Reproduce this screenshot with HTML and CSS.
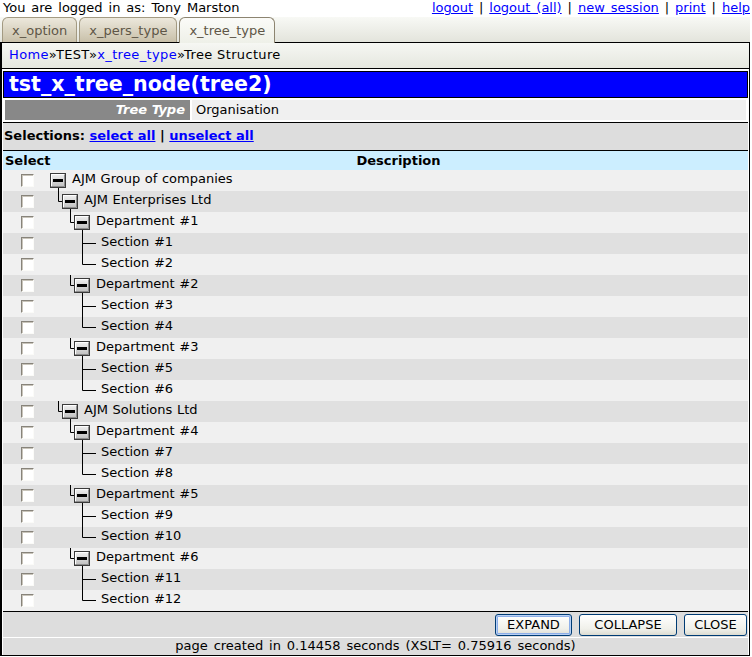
FILE: index.html
```html
<!DOCTYPE html>
<html>
<head>
<meta charset="utf-8">
<title>tst_x_tree_node(tree2)</title>
<link rel="stylesheet" href="styles.css">
</head>
<body>
<svg class="defs" width="0" height="0" aria-hidden="true">
  <defs>
    <linearGradient id="bg" x1="0" y1="0" x2="0" y2="1">
      <stop offset="0" stop-color="#f2f2f2"/>
      <stop offset="1" stop-color="#bdbdbd"/>
    </linearGradient>
    <g id="b">
      <rect x="0.5" y="0.5" width="15" height="14" fill="url(#bg)" stroke="#3a3a3a"/>
      <path d="M1.5 13V1.5H14" stroke="#ffffff" fill="none"/>
      <path d="M14.5 1.5V13.5H1.5" stroke="#8c8c8c" fill="none"/>
      <rect x="3" y="6" width="10" height="3" fill="#000"/>
    </g>
  </defs>
</svg>

<div class="topbar">
  <span>You are logged in as: Tony Marston</span>
  <span class="links"><a href="#">logout</a> | <a href="#">logout (all)</a> | <a href="#">new session</a> | <a href="#">print</a> | <a href="#">help</a></span>
</div>

<div class="tabbar">
  <span class="tab">x_option</span>
  <span class="tab">x_pers_type</span>
  <span class="tab active">x_tree_type</span>
</div>

<div class="main">
  <div class="crumbs"><a href="#">Home</a>»TEST»<a href="#">x_tree_type</a>»Tree Structure</div>
  <div class="content">
    <h1 class="title">tst_x_tree_node(tree2)</h1>
    <div class="outer">
      <div class="olabel">Tree Type</div>
      <div class="ovalue">Organisation</div>
    </div>
    <div class="selections">Selections: <a href="#">select all</a> | <a href="#">unselect all</a></div>

    <div class="grid">
      <div class="head">
        <div class="hsel">Select</div>
        <div class="hdesc">Description</div>
      </div>

      <div class="row odd"><div class="sel"><span class="cb"></span></div><div class="desc"><svg class="t" width="26" height="21"><use href="#b" x="4" y="3"/><path d="M12.5 18V21"/></svg><span class="lbl">AJM Group of companies</span></div></div>
      <div class="row even"><div class="sel"><span class="cb"></span></div><div class="desc"><svg class="t" width="38" height="21"><path d="M12.5 0V10.5H16"/><use href="#b" x="16" y="3"/><path d="M24.5 18V21"/></svg><span class="lbl">AJM Enterprises Ltd</span></div></div>
      <div class="row odd"><div class="sel"><span class="cb"></span></div><div class="desc"><svg class="t" width="50" height="21"><path d="M24.5 0V10.5H28"/><use href="#b" x="28" y="3"/><path d="M36.5 18V21"/></svg><span class="lbl">Department #1</span></div></div>
      <div class="row even"><div class="sel"><span class="cb"></span></div><div class="desc"><svg class="t" width="55" height="21"><path d="M36.5 0V21M36 10.5H50"/></svg><span class="lbl">Section #1</span></div></div>
      <div class="row odd"><div class="sel"><span class="cb"></span></div><div class="desc"><svg class="t" width="55" height="21"><path d="M36.5 0V10.5H50"/></svg><span class="lbl">Section #2</span></div></div>
      <div class="row even"><div class="sel"><span class="cb"></span></div><div class="desc"><svg class="t" width="50" height="21"><path d="M24.5 0V10.5H28"/><use href="#b" x="28" y="3"/><path d="M36.5 18V21"/></svg><span class="lbl">Department #2</span></div></div>
      <div class="row odd"><div class="sel"><span class="cb"></span></div><div class="desc"><svg class="t" width="55" height="21"><path d="M36.5 0V21M36 10.5H50"/></svg><span class="lbl">Section #3</span></div></div>
      <div class="row even"><div class="sel"><span class="cb"></span></div><div class="desc"><svg class="t" width="55" height="21"><path d="M36.5 0V10.5H50"/></svg><span class="lbl">Section #4</span></div></div>
      <div class="row odd"><div class="sel"><span class="cb"></span></div><div class="desc"><svg class="t" width="50" height="21"><path d="M24.5 0V10.5H28"/><use href="#b" x="28" y="3"/><path d="M36.5 18V21"/></svg><span class="lbl">Department #3</span></div></div>
      <div class="row even"><div class="sel"><span class="cb"></span></div><div class="desc"><svg class="t" width="55" height="21"><path d="M36.5 0V21M36 10.5H50"/></svg><span class="lbl">Section #5</span></div></div>
      <div class="row odd"><div class="sel"><span class="cb"></span></div><div class="desc"><svg class="t" width="55" height="21"><path d="M36.5 0V10.5H50"/></svg><span class="lbl">Section #6</span></div></div>
      <div class="row even"><div class="sel"><span class="cb"></span></div><div class="desc"><svg class="t" width="38" height="21"><path d="M12.5 0V10.5H16"/><use href="#b" x="16" y="3"/><path d="M24.5 18V21"/></svg><span class="lbl">AJM Solutions Ltd</span></div></div>
      <div class="row odd"><div class="sel"><span class="cb"></span></div><div class="desc"><svg class="t" width="50" height="21"><path d="M24.5 0V10.5H28"/><use href="#b" x="28" y="3"/><path d="M36.5 18V21"/></svg><span class="lbl">Department #4</span></div></div>
      <div class="row even"><div class="sel"><span class="cb"></span></div><div class="desc"><svg class="t" width="55" height="21"><path d="M36.5 0V21M36 10.5H50"/></svg><span class="lbl">Section #7</span></div></div>
      <div class="row odd"><div class="sel"><span class="cb"></span></div><div class="desc"><svg class="t" width="55" height="21"><path d="M36.5 0V10.5H50"/></svg><span class="lbl">Section #8</span></div></div>
      <div class="row even"><div class="sel"><span class="cb"></span></div><div class="desc"><svg class="t" width="50" height="21"><path d="M24.5 0V10.5H28"/><use href="#b" x="28" y="3"/><path d="M36.5 18V21"/></svg><span class="lbl">Department #5</span></div></div>
      <div class="row odd"><div class="sel"><span class="cb"></span></div><div class="desc"><svg class="t" width="55" height="21"><path d="M36.5 0V21M36 10.5H50"/></svg><span class="lbl">Section #9</span></div></div>
      <div class="row even"><div class="sel"><span class="cb"></span></div><div class="desc"><svg class="t" width="55" height="21"><path d="M36.5 0V10.5H50"/></svg><span class="lbl">Section #10</span></div></div>
      <div class="row odd"><div class="sel"><span class="cb"></span></div><div class="desc"><svg class="t" width="50" height="21"><path d="M24.5 0V10.5H28"/><use href="#b" x="28" y="3"/><path d="M36.5 18V21"/></svg><span class="lbl">Department #6</span></div></div>
      <div class="row even"><div class="sel"><span class="cb"></span></div><div class="desc"><svg class="t" width="55" height="21"><path d="M36.5 0V21M36 10.5H50"/></svg><span class="lbl">Section #11</span></div></div>
      <div class="row odd"><div class="sel"><span class="cb"></span></div><div class="desc"><svg class="t" width="55" height="21"><path d="M36.5 0V10.5H50"/></svg><span class="lbl">Section #12</span></div></div>
    </div>

    <div class="actions">
      <button class="btn focus w-expand">EXPAND</button>
      <button class="btn w-collapse">COLLAPSE</button>
      <button class="btn w-close">CLOSE</button>
    </div>
    <div class="footer">page created in 0.14458 seconds (XSLT= 0.75916 seconds)</div>
  </div>
</div>
</body>
</html>
```

FILE: styles.css
```css
* { box-sizing: border-box; }

html, body {
  margin: 0;
  padding: 0;
  background: #fff;
}

body {
  width: 752px;
  font-family: "DejaVu Sans", Verdana, sans-serif;
  font-size: 13px;
  color: #000;
}

.defs {
  display: block;
  width: 0;
  height: 0;
  overflow: hidden;
}

a { color: #0000ff; }

.topbar {
  display: flex;
  justify-content: space-between;
  height: 17px;
  line-height: 15px;
  padding: 0 2px 0 3px;
  word-spacing: 1.8px;
}
.topbar a { text-decoration: underline; }

.tabbar {
  display: flex;
  align-items: flex-end;
  gap: 2px;
  width: 750px;
  height: 25px;
  padding-left: 2px;
  background: linear-gradient(#f8f9f5, #e3e4dc);
}

.tab {
  height: 25px;
  line-height: 25px;
  padding: 0 9px;
  border: 1px solid #a39a82;
  border-bottom: none;
  border-radius: 6px 6px 0 0;
  background: linear-gradient(#ece8dc, #c8c0a9);
  color: #5e5647;
}

.tab.active {
  position: relative;
  z-index: 1;
  height: 26px;
  margin-bottom: -1px;
  border-color: #8c8470;
  background: linear-gradient(#fbfbf8, #eef0e8);
}

.main {
  width: 750px;
  border: 1px solid #000;
  border-left-width: 2px;
}

.crumbs {
  height: 26px;
  line-height: 24px;
  padding-left: 7px;
  border-bottom: 1px solid #000;
  background: linear-gradient(#f6f7f3, #e5e7df);
  letter-spacing: 0.35px;
}
.crumbs a { text-decoration: none; }

.content {
  padding: 2px 1px 0 1px;
}

.title {
  margin: 0;
  height: 27px;
  line-height: 24px;
  padding-left: 5px;
  border: 1px solid #000;
  background: #0000ff;
  color: #fff;
  font-size: 20.6px;
  font-weight: bold;
}

.outer {
  display: flex;
  gap: 2px;
  padding: 2px 2px;
  height: 24px;
}
.olabel {
  width: 185px;
  line-height: 19px;
  padding-right: 5px;
  text-align: right;
  background: #888888;
  color: #fff;
  font-weight: bold;
  font-style: italic;
}
.ovalue {
  flex: 1;
  line-height: 19px;
  padding-left: 4px;
  background: #f0f0f0;
}

.selections {
  height: 29px;
  line-height: 26px;
  padding-left: 1px;
  border-top: 1px solid #000;
  border-bottom: 1px solid #000;
  background: #dddddd;
  font-weight: bold;
}

.head {
  display: flex;
  height: 19px;
  line-height: 19px;
  background: #cceeff;
  font-weight: bold;
}
.hsel {
  width: 43px;
  padding-left: 2px;
}
.hdesc {
  flex: 1;
  text-align: center;
  padding-left: 3px;
}

.row {
  display: flex;
  align-items: center;
  height: 21px;
}
.row.odd { background: #f0f0f0; }
.row.even { background: #e0e0e0; }

.sel {
  width: 43px;
  display: flex;
  align-items: center;
}
.cb {
  display: block;
  width: 13px;
  height: 13px;
  margin-left: 18px;
  border: 1px solid;
  border-color: #87837a #fbfbf8 #fbfbf8 #87837a;
  background: #ffffff;
  box-shadow: inset 1px 1px 0 #c9c5bb;
}

.desc {
  display: flex;
  align-items: flex-start;
  height: 21px;
}
.t {
  display: block;
  flex: none;
}
.t path {
  stroke: #000;
  stroke-width: 1;
  fill: none;
}
.lbl {
  line-height: 18px;
  word-spacing: 0.5px;
}

.actions {
  display: flex;
  justify-content: flex-end;
  align-items: center;
  gap: 7px;
  height: 26px;
  padding-right: 1px;
  border-top: 1px solid #000;
  background: #dddddd;
}

.btn {
  height: 22px;
  padding: 0;
  border: 1px solid #003c74;
  border-radius: 3px;
  background: linear-gradient(#ffffff, #f0f0ea 70%, #dcdcd2);
  font-family: "DejaVu Sans", Verdana, sans-serif;
  font-size: 13px;
  color: #000;
}
.btn.focus {
  box-shadow: inset 0 0 0 1px #b8d0f4, inset 0 0 0 2px #8caee8;
}
.w-expand { width: 77px; }
.w-collapse { width: 98px; }
.w-close { width: 63px; }

.footer {
  height: 18px;
  line-height: 16px;
  text-align: center;
  border-top: 1px solid #fff;
  background: #dddddd;
  word-spacing: 1.75px;
}
```
